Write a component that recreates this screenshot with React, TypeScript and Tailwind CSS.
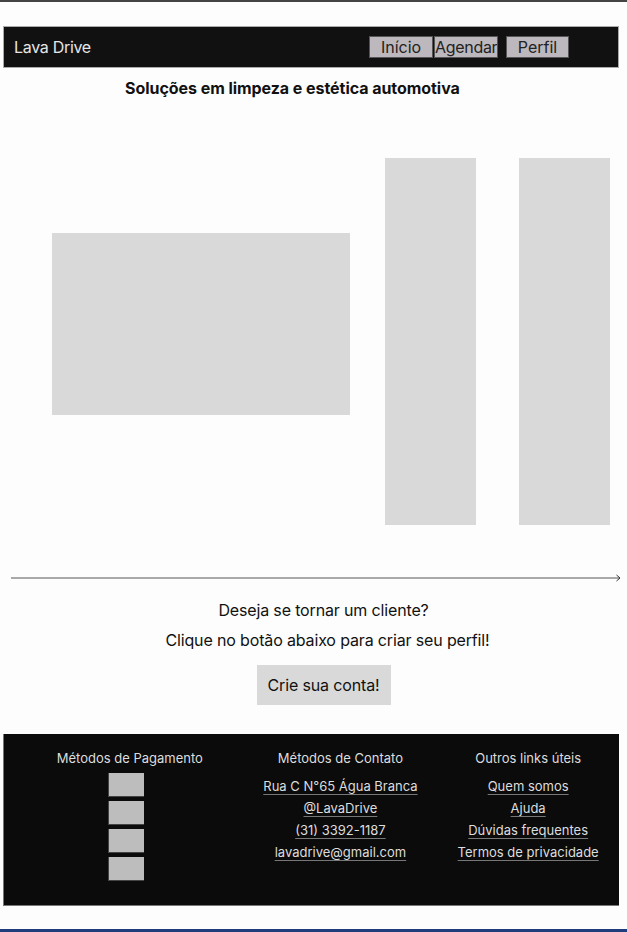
export default function App() {
  const contato = ['Rua C N°65 Água Branca', '@LavaDrive', '(31) 3392-1187', 'lavadrive@gmail.com'];
  const links = ['Quem somos', 'Ajuda', 'Dúvidas frequentes', 'Termos de privacidade'];

  return (
    <div className="w-[627px] h-[932px] bg-[#fdfdfd] font-['Inter',sans-serif] text-[#111] overflow-hidden">
      <div className="h-[2px] bg-[#444]" />

      {/* cabeçalho */}
      <header className="mt-[24px] ml-[3px] w-[616px] h-[42px] bg-[#111] border border-[#aaa] flex items-center">
        <span className="ml-[10px] text-[16px] text-[#e6e6e6] tracking-[-0.3px]">Lava Drive</span>
        <nav className="ml-auto mr-[49px] flex items-center">
          <button className="w-[64px] h-[22px] bg-[#bdb8bd] border border-[#555] text-[16px] leading-[20px] text-[#222]">Início</button>
          <button className="ml-[1px] w-[64px] h-[22px] bg-[#bdb8bd] border border-[#555] text-[16px] leading-[20px] text-[#222] overflow-hidden whitespace-nowrap tracking-[-0.3px]">Agendar</button>
          <button className="ml-[8px] w-[63px] h-[22px] bg-[#bdb8bd] border border-[#555] text-[16px] leading-[20px] text-[#222]">Perfil</button>
        </nav>
      </header>

      <h1 className="mt-[8px] pl-[125px] text-[16px] leading-[24px] font-bold tracking-[-0.05px]">
        Soluções em limpeza e estética automotiva
      </h1>

      {/* imagens */}
      <div className="mt-[58px] flex items-start">
        <div className="ml-[52px] mt-[75px] w-[298px] h-[182px] bg-[#d9d9d9]" />
        <div className="ml-[35px] w-[91px] h-[367px] bg-[#d9d9d9]" />
        <div className="ml-[43px] w-[91px] h-[367px] bg-[#d9d9d9]" />
      </div>

      <svg className="mt-[48px] block" width="627" height="10" viewBox="0 0 627 10">
        <line x1="11" y1="5" x2="620" y2="5" stroke="#555" strokeWidth="1" />
        <path d="M616.5 2 L620 5 L616.5 8" fill="none" stroke="#333" strokeWidth="1" />
      </svg>

      <div className="pl-[20px] flex flex-col items-center text-[16px] leading-[24px] tracking-[-0.15px]">
        <p className="mt-[15px]">Deseja se tornar um cliente?</p>
        <p className="mt-[6px] pl-[8px]">Clique no botão abaixo para criar seu perfil!</p>
        <button className="mt-[13px] w-[134px] h-[40px] bg-[#d9d9d9] text-[16px]">Crie sua conta!</button>
      </div>

      {/* rodapé */}
      <footer className="mt-[29px] ml-[3px] w-[616px] h-[172px] bg-[#0b0b0b] border-l border-b border-[#777] flex text-[13px] text-[#ddd] pt-[16px]">
        <div className="w-[252px] flex flex-col items-center">
          <h3 className="leading-[16px]">Métodos de Pagamento</h3>
          <div className="mt-[7px] mr-[8px] flex flex-col gap-[4px]">
            {[0, 1, 2, 3].map((i) => (
              <div key={i} className="w-[36px] h-[24px] bg-[#bdbdbd] border-l border-b border-[#444]" />
            ))}
          </div>
        </div>
        <div className="w-[170px] flex flex-col items-center">
          <h3 className="leading-[16px]">Métodos de Contato</h3>
          <ul className="mt-[9px] flex flex-col items-center">
            {contato.map((c) => (
              <li key={c} className="leading-[22px] underline decoration-[#777] underline-offset-[3px]">{c}</li>
            ))}
          </ul>
        </div>
        <div className="ml-[12px] w-[182px] flex flex-col items-center">
          <h3 className="leading-[16px]">Outros links úteis</h3>
          <ul className="mt-[9px] flex flex-col items-center">
            {links.map((l) => (
              <li key={l} className="leading-[22px] underline decoration-[#777] underline-offset-[3px]">{l}</li>
            ))}
          </ul>
        </div>
      </footer>

      <div className="mt-[23px] h-[4px] bg-[#1f3c7c]" />
    </div>
  );
}
